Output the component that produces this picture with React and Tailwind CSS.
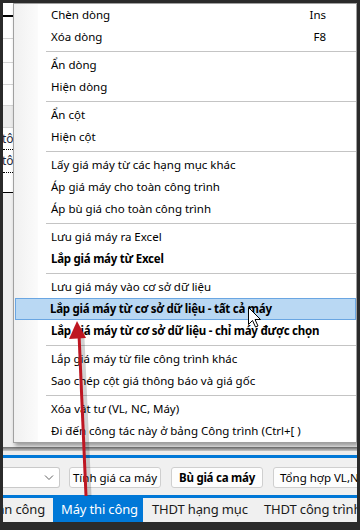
import React from 'react';

const menuItems = [
  { label: 'Chèn dòng', shortcut: 'Ins' },
  { label: 'Xóa dòng', shortcut: 'F8' },
  'sep',
  { label: 'Ẩn dòng' },
  { label: 'Hiện dòng' },
  'sep',
  { label: 'Ẩn cột' },
  { label: 'Hiện cột' },
  'sep',
  { label: 'Lấy giá máy từ các hạng mục khác' },
  { label: 'Áp giá máy cho toàn công trình' },
  { label: 'Áp bù giá cho toàn công trình' },
  'sep',
  { label: 'Lưu giá máy ra Excel' },
  { label: 'Lắp giá máy từ Excel', bold: true },
  'sep',
  { label: 'Lưu giá máy vào cơ sở dữ liệu' },
  { label: 'Lắp giá máy từ cơ sở dữ liệu - tất cả máy', bold: true, active: true },
  { label: 'Lắp giá máy từ cơ sở dữ liệu - chỉ máy được chọn', bold: true },
  'sep',
  { label: 'Lắp giá máy từ file công trình khác' },
  { label: 'Sao chép cột giá thông báo và giá gốc' },
  'sep',
  { label: 'Xóa vật tư (VL, NC, Máy)' },
  { label: 'Đi đến công tác này ở bảng Công trình (Ctrl+[ )' },
];

// grid rows peeking out left of the popup
const GridBehind = () => (
  <div className="h-[452px] flex flex-col">
    <div className="bg-white h-[12px]" />
    <div className="bg-black h-[2px]" />
    <div className="bg-white h-[22px] border-b border-[#d4d4d4]" />
    <div className="bg-white h-[24px] border-b border-[#d4d4d4]" />
    <div className="bg-white h-[22px] border-b border-[#d4d4d4]" />
    <div className="bg-white h-[21px] border-b border-[#d4d4d4]" />
    <div className="bg-[#ececec] h-[22px] border-b border-[#d4d4d4]" />
    <div className="bg-white h-[22px] border-b border-dotted border-black flex items-center overflow-hidden text-[12px] text-[#1e2b3c]">
      <span className="whitespace-nowrap -ml-[1px]">tô</span>
    </div>
    <div className="bg-white h-[23px] border-b border-dotted border-black flex items-center overflow-hidden text-[12px] text-[#1e2b3c]">
      <span className="whitespace-nowrap -ml-[1px]">tô</span>
    </div>
    <div className="bg-white h-[19px]" />
    <div className="bg-black h-[1px]" />
    <div className="bg-[#efefef] flex-1" />
    <div className="h-[4px] bg-gradient-to-b from-[#6f6f6f] to-[#c9c9c9]" />
    <div className="h-[4px] bg-[#ececec]" />
  </div>
);

const ContextMenu = () => (
  <div className="absolute left-[10px] top-0 w-[344px] h-[440px] bg-white border border-[#a0a0a0] shadow-[2px_3px_4px_rgba(0,0,0,0.35)] text-[11.5px]">
    <div className="absolute left-0 top-0 bottom-0 w-[24px] bg-gradient-to-r from-[#f0f0f0] to-[#fbfbfb]" />
    <div className="relative flex flex-col">
      {menuItems.map((item, i) => {
        if (item === 'sep') {
          return (
            <div key={i} className="h-[6px] flex items-center pl-[32px]">
              <div className="h-px w-full bg-[#c4c4c4]" />
            </div>
          );
        }
        return (
          <div key={i} className="h-[22px] pl-[1px]">
            <div
              className={
                item.active
                  ? 'h-full flex items-center pl-[34px] pr-[29px] border border-[#6aa6e2] bg-[#b9d8f3]'
                  : 'h-full flex items-center pl-[35px] pr-[29px] border border-transparent'
              }
            >
              <span
                className={
                  item.bold
                    ? 'flex-1 whitespace-nowrap font-bold tracking-[-0.25px]'
                    : 'flex-1 whitespace-nowrap'
                }
              >
                {item.label}
              </span>
              {item.shortcut && <span className="whitespace-nowrap">{item.shortcut}</span>}
            </div>
          </div>
        );
      })}
    </div>
  </div>
);

const Toolbar = () => (
  <div className="flex flex-col">
    <div className="h-[3px] bg-[#0078d7]" />
    <div className="h-[37px] bg-[#f0f0f0] flex items-start pt-[9px] gap-[9px] overflow-hidden text-[11.5px]">
      <div className="w-[57px] h-[21px] shrink-0 bg-white border border-l-0 border-[#c9c9c9] rounded-r-[3px] flex items-center justify-end pr-[5px]">
        <svg width="10" height="6" viewBox="0 0 10 6" fill="none" stroke="#606060" strokeWidth="1">
          <path d="M1 0.5 L5 4.5 L9 0.5" />
        </svg>
      </div>
      <div className="flex gap-[10px] shrink-0">
        <div className="w-[92px] h-[21px] bg-[#fdfdfd] border border-[#cfcfcf] rounded-[3px] flex items-center justify-center whitespace-nowrap">
          Tính giá ca máy
        </div>
        <div className="w-[92px] h-[21px] bg-[#fdfdfd] border border-[#cfcfcf] rounded-[3px] flex items-center justify-center whitespace-nowrap font-bold tracking-[-0.25px]">
          Bù giá ca máy
        </div>
        <div className="w-[110px] h-[21px] bg-[#fdfdfd] border border-[#cfcfcf] rounded-[3px] flex items-center pl-[6px] whitespace-nowrap">
          Tổng hợp VL,NC,M
        </div>
      </div>
    </div>
    <div className="h-[3px] bg-[#0078d7]" />
    <div className="h-[24px] bg-[#f0f0f0] flex text-[13px] tracking-[-0.15px] text-[#1b1b1b] overflow-hidden">
      <div className="w-[50px] shrink-0 flex items-center justify-end pr-[8px] overflow-hidden whitespace-nowrap">
        Nhân công
      </div>
      <div className="w-[90px] shrink-0 bg-[#0078d7] text-white flex items-center pl-[8px] whitespace-nowrap">
        Máy thi công
      </div>
      <div className="w-[112px] shrink-0 flex items-center pl-[9px] whitespace-nowrap">THDT hạng mục</div>
      <div className="shrink-0 flex items-center pl-[9px] whitespace-nowrap">THDT công trình</div>
    </div>
  </div>
);

const Overlay = () => (
  <svg className="absolute left-0 top-0 pointer-events-none" width="360" height="530" viewBox="0 0 360 530">
    {/* arrow shadow */}
    <line x1="82" y1="338" x2="89" y2="496" stroke="rgba(0,0,0,0.18)" strokeWidth="5" />
    <line x1="79" y1="334" x2="86" y2="496" stroke="#be1622" strokeWidth="3" />
    <polygon points="77,321 69,339 86,338" fill="#be1622" />
    {/* mouse pointer */}
    <path
      d="M248.5 307.5 L248.5 324.5 L252.5 320.5 L255.5 327 L258 326 L255 319.5 L260.5 319.5 Z"
      fill="#ffffff"
      stroke="#000000"
      strokeWidth="1"
      strokeLinejoin="miter"
    />
  </svg>
);

export default function App() {
  return (
    <div className="relative w-[360px] h-[530px] bg-[#2b2b2b] pt-[3px] pl-[3px] pr-[3px] pb-[8px] font-['Noto_Sans','Liberation_Sans',sans-serif] text-[12px] text-black">
      <div className="relative w-full h-full bg-[#f0f0f0] flex flex-col overflow-hidden">
        <GridBehind />
        <Toolbar />
        <ContextMenu />
      </div>
      <Overlay />
    </div>
  );
}
